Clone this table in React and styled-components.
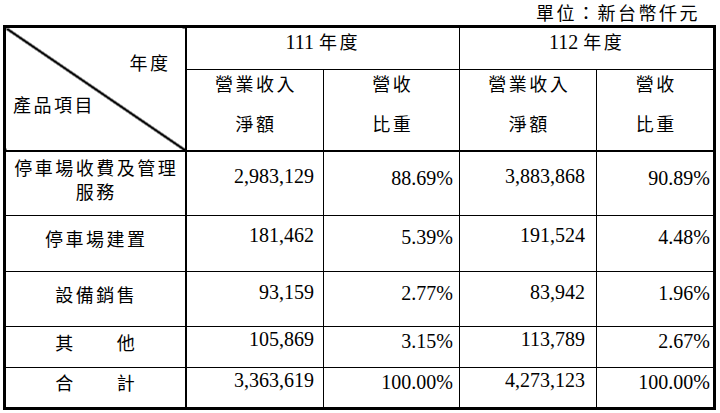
import React from 'react'
import styled, { createGlobalStyle } from 'styled-components'

const GlobalStyle = createGlobalStyle`
  html, body {
    margin: 0;
    padding: 0;
    background: #fff;
  }
  body {
    font-family: "Liberation Serif", "Noto Sans CJK TC", serif;
    color: #000;
  }
`

const Page = styled.div`
  width: 720px;
  box-sizing: border-box;
  padding: 0 4px 0 3px;
`

const Unit = styled.div`
  height: 25px;
  line-height: 24px;
  text-align: right;
  padding-right: 16px;
  font-family: "Noto Sans CJK TC", sans-serif;
  font-size: 18px;
  letter-spacing: 2.5px;
`

const Table = styled.table`
  width: 713px;
  table-layout: fixed;
  border-collapse: collapse;
  border: 3px solid #000;
`

const Row = styled.tr`
  height: ${({ $h }) => $h}px;
`

const Cell = styled.td`
  border: 1px solid #000;
  padding: 0;
  vertical-align: top;
  line-height: 24px;
`

const CornerCell = styled(Cell)`
  border-right-width: 2px;
  border-bottom-width: 2px;
  background: linear-gradient(
    to top right,
    transparent calc(50% - 1.4px),
    #000 calc(50% - 1px),
    #000 calc(50% + 1px),
    transparent calc(50% + 1.4px)
  );
`

const Corner = styled.div`
  height: 122px;
  display: flex;
  flex-direction: column;
`

const Label = styled.span`
  font-family: "Noto Sans CJK TC", sans-serif;
  font-size: 18px;
  letter-spacing: 2.5px;
`

const CornerTop = styled(Label)`
  align-self: flex-end;
  margin-top: 22px;
  padding-right: 14px;
`

const CornerBottom = styled(Label)`
  margin-top: 18px;
  padding-left: 7px;
`

const YearCell = styled(Cell)`
  text-align: center;
  padding-top: 1px;
  font-size: 20px;
`

const YearText = styled.span`
  font-family: "Noto Sans CJK TC", sans-serif;
  font-size: 18px;
  letter-spacing: 2.5px;
`

const SubCell = styled(Cell)`
  border-bottom-width: 2px;
  padding-top: 1px;
`

const SubStack = styled.div`
  display: flex;
  flex-direction: column;
  align-items: center;
  gap: 16px;
  padding-left: 2.5px;
`

const ItemCell = styled(Cell)`
  border-right-width: 2px;
  text-align: center;
  padding: ${({ $top }) => $top}px 4px 0 6px;
`

const ItemLine = styled(Label)`
  display: block;
`

const NumCell = styled(Cell)`
  text-align: right;
  font-size: 20px;
  line-height: 22px;
  padding-top: ${({ $top }) => $top}px;
  padding-right: ${({ $right }) => $right}px;
`

const columns = [181, 138, 136, 137, 118]
const rightPad = [9, 6, 11, 3]

const rows = [
  { item: ['停車場收費及管理', '服務'], values: ['2,983,129', '88.69%', '3,883,868', '90.89%'], h: 64, it: 3, nt: 12.5, pt: 15 },
  { item: ['停車場建置'], values: ['181,462', '5.39%', '191,524', '4.48%'], h: 56, it: 10, nt: 8.5, pt: 10 },
  { item: ['設備銷售'], values: ['93,159', '2.77%', '83,942', '1.96%'], h: 55, it: 10, nt: 9, pt: 10.5 },
  { item: ['其　　他'], values: ['105,869', '3.15%', '113,789', '2.67%'], h: 41, it: 3, nt: 1.5, pt: 3.5 },
  { item: ['合　　計'], values: ['3,363,619', '100.00%', '4,273,123', '100.00%'], h: 41.5, it: 2, nt: 1.5, pt: 3.5 },
]

const SubHead = ({ top, bottom }) => (
  <SubCell>
    <SubStack>
      <Label>{top}</Label>
      <Label>{bottom}</Label>
    </SubStack>
  </SubCell>
)

const App = () => (
  <Page>
    <GlobalStyle />
    <Unit>單位：新台幣仟元</Unit>
    <Table>
      <colgroup>
        {columns.map((w, i) => (
          <col key={i} style={{ width: w }} />
        ))}
      </colgroup>
      <thead>
        <Row $h={42.5}>
          <CornerCell rowSpan={2}>
            <Corner>
              <CornerTop>年度</CornerTop>
              <CornerBottom>產品項目</CornerBottom>
            </Corner>
          </CornerCell>
          <YearCell colSpan={2}>
            111 <YearText>年度</YearText>
          </YearCell>
          <YearCell colSpan={2}>
            112 <YearText>年度</YearText>
          </YearCell>
        </Row>
        <Row $h={82}>
          <SubHead top="營業收入" bottom="淨額" />
          <SubHead top="營收" bottom="比重" />
          <SubHead top="營業收入" bottom="淨額" />
          <SubHead top="營收" bottom="比重" />
        </Row>
      </thead>
      <tbody>
        {rows.map(r => (
          <Row key={r.item[0]} $h={r.h}>
            <ItemCell $top={r.it}>
              {r.item.map(line => (
                <ItemLine key={line}>{line}</ItemLine>
              ))}
            </ItemCell>
            {r.values.map((v, i) => (
              <NumCell key={i} $top={i % 2 ? r.pt : r.nt} $right={rightPad[i]}>
                {v}
              </NumCell>
            ))}
          </Row>
        ))}
      </tbody>
    </Table>
  </Page>
)

export default App
